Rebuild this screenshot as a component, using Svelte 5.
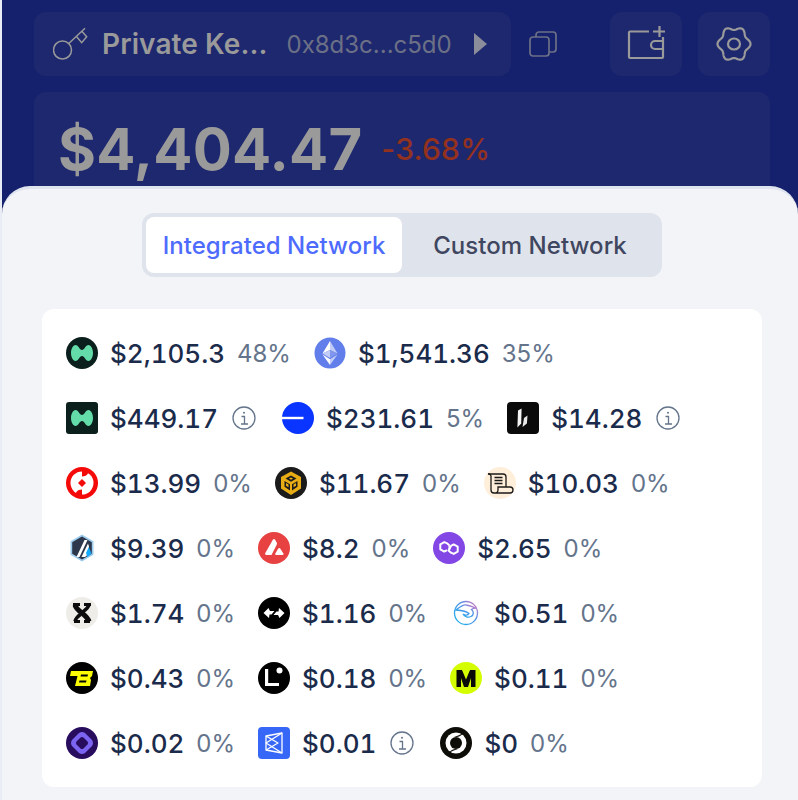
<script lang="ts">
  interface Item {
    icon: string;
    value: string;
    pct?: string;
  }

  const rows: Item[] = [
    { icon: "manta", value: "$2,105.3", pct: "48%" },
    { icon: "eth", value: "$1,541.36", pct: "35%" },
    { icon: "mantaSq", value: "$449.17" },
    { icon: "base", value: "$231.61", pct: "5%" },
    { icon: "blast", value: "$14.28" },
    { icon: "red", value: "$13.99", pct: "0%" },
    { icon: "bnb", value: "$11.67", pct: "0%" },
    { icon: "scroll", value: "$10.03", pct: "0%" },
    { icon: "arb", value: "$9.39", pct: "0%" },
    { icon: "avax", value: "$8.2", pct: "0%" },
    { icon: "matic", value: "$2.65", pct: "0%" },
    { icon: "x", value: "$1.74", pct: "0%" },
    { icon: "swap", value: "$1.16", pct: "0%" },
    { icon: "bird", value: "$0.51", pct: "0%" },
    { icon: "bl", value: "$0.43", pct: "0%" },
    { icon: "linea", value: "$0.18", pct: "0%" },
    { icon: "metis", value: "$0.11", pct: "0%" },
    { icon: "purple", value: "$0.02", pct: "0%" },
    { icon: "blue", value: "$0.01" },
    { icon: "ring", value: "$0", pct: "0%" },
  ];

  // six-lobed cog outline
  const cogPath = Array.from({ length: 120 }, (_, i) => {
    const a = (i / 120) * Math.PI * 2;
    const r = 0.9 + 0.1 * Math.cos(6 * a);
    return `${(18 + 16.5 * r * Math.cos(a)).toFixed(2)},${(17 + 17.5 * r * Math.sin(a)).toFixed(2)}`;
  }).join(" ");
</script>

{#snippet netIcon(name: string)}
  <svg class="net" viewBox="0 0 32 32" aria-hidden="true">
    {#if name === "manta" || name === "mantaSq"}
      {#if name === "manta"}
        <circle cx="16" cy="16" r="16" fill="#0b1f1c" />
      {:else}
        <rect width="32" height="32" rx="3" fill="#0b1f1c" />
      {/if}
      <path d="M5 16c0-4 2-8 4.500-8 3 0 4 5 6.500 5s3.500-5 6.500-5c2.500 0 4.500 4 4.500 8s-2 8-4.500 8c-3 0-4-5-6.500-5s-3.500 5-6.500 5C7 24 5 20 5 16z" fill="#63dcaa" />
    {:else if name === "eth"}
      <circle cx="16" cy="16" r="15.500" fill="#627eea" />
      <path d="M16 4v9l7.500 3.400z" fill="#c1ccf7" />
      <path d="M16 4L8.500 16.400 16 13z" fill="#fff" />
      <path d="M16 13v7.900l7.500-4.500z" fill="#8197ee" />
      <path d="M16 13l-7.500 3.400 7.500 4.500z" fill="#c1ccf7" />
      <path d="M16 22.300V28l7.500-10.400z" fill="#c1ccf7" />
      <path d="M16 22.300l-7.500-4.700L16 28z" fill="#fff" />
    {:else if name === "base"}
      <circle cx="16" cy="16" r="16" fill="#0a34ff" />
      <rect x="0" y="14.800" width="21.500" height="2.400" fill="#fff" />
    {:else if name === "blast"}
      <rect width="32" height="32" rx="4" fill="#0a0a0a" />
      <path d="M11 8.500l3.600-2-.4 15-3.800 4z" fill="#f4f4f4" />
      <path d="M17 16l3.500-2.500-.6 8-4.400 3.500z" fill="#e8e8e8" />
    {:else if name === "red"}
      <circle cx="16" cy="16" r="16" fill="#f50a0a" />
      <circle cx="16" cy="16" r="11.500" fill="#fff" />
      <path d="M16 3h6c1 3.500-1 6.500-6 6.500zM16 29h-6c-1-3.500 1-6.500 6-6.500z" fill="#f50a0a" />
      <path d="M16 12l4 4-4 4-4-4z" fill="#f50a0a" />
    {:else if name === "bnb"}
      <circle cx="16" cy="16" r="16" fill="#1c1b1c" />
      <path d="M16 4.500l10 5.500v11.500l-10 6.500-10-6.500V10z" fill="#e8ad14" />
      <path d="M16 8.500l5.500 3-5.500 3.200-5.500-3.200zM9.500 14l5.500 3.200v6.300l-5.500-3.700zM22.500 14L17 17.200v6.300l5.500-3.700z" fill="#1c1b1c" />
      <path d="M16 10.500l2 1-2 1.200-2-1.200zM11 16l2.500 1.500v2.800l-2.500-1.600zM21 16l-2.500 1.500v2.800l2.500-1.600z" fill="#e8ad14" />
    {:else if name === "scroll"}
      <circle cx="16" cy="16" r="16" fill="#ffeeda" />
      <g fill="none" stroke="#1b1a18" stroke-width="1.300">
        <path d="M4 7h15a3 3 0 0 1 3 3v10" />
        <path d="M4 7a2.500 2.500 0 0 1 3 2v14a3 3 0 0 0 3 3h16a3 3 0 0 0 0-6H14v3a3 3 0 0 1-4 3" />
        <path d="M10.500 10.500h8M10.500 13.500h8M10.500 16.500h8" />
      </g>
    {:else if name === "arb"}
      <path d="M16 2.500l11.500 6.700v13.600L16 29.500 4.500 22.800V9.200z" fill="#9dcced" />
      <path d="M16 4.500l9.800 5.700v11.600L16 27.500 6.200 21.800V10.200z" fill="#2c374b" />
      <path d="M10.500 25l8-17h3l-8 17zM15.500 25L22 11.500l1 3v7l-4 3.500z" fill="#fff" />
      <path d="M20 21l2.800-6 2.700 6.500-4 3.500z" fill="#12aaff" />
    {:else if name === "avax"}
      <circle cx="16" cy="16" r="16" fill="#e84142" />
      <path d="M15 7.500c.5-.8 1.500-.8 2 0l1.700 3c.4.700.4 1.500 0 2.200L13.500 23H8.200c-.9 0-1.400-1-1-1.700z" fill="#fff" />
      <path d="M20.300 16.500c.5-.8 1.500-.8 1.900 0l3.200 5c.5.700 0 1.500-.9 1.500h-6.300c-.9 0-1.400-.8-.9-1.500z" fill="#fff" />
    {:else if name === "matic"}
      <circle cx="16" cy="16" r="16" fill="#8247e5" />
      <g fill="none" stroke="#fff" stroke-width="2" stroke-linejoin="round">
        <path d="M16.500 13.500l-2.500-2.200-2.700-1.200-4 2.200v5l4 2.300 2.700-1.500" />
        <path d="M15.500 18.500l2.500 2.200 2.700 1.200 4-2.200v-5l-4-2.300-2.700 1.500z" />
        <path d="M16.500 13.500v4" />
      </g>
    {:else if name === "x"}
      <circle cx="16" cy="16" r="16" fill="#eeede8" />
      <g fill="none" stroke="#0c0c0c" stroke-linecap="butt">
        <path d="M7 7.500h7M18 7.500h7M8 24.500h6M18 24.500h6" stroke-width="3" />
        <path d="M9 8c2 7 12 9 14 16.500" stroke-width="5" />
        <path d="M23 8c-1.500 4-5 6-7 7.500M14.500 17.500c-2.500 1.500-4.500 3.500-5.500 7" stroke-width="3.500" />
      </g>
    {:else if name === "swap"}
      <circle cx="16" cy="16" r="16" fill="#000" />
      <path d="M5.500 16l5-5 1.500 3h4.500l-3 3.500h-2L11 21z" fill="#fff" />
      <path d="M26.500 16l-5 5-1.500-3h-4.500l3-3.500h2L21 11z" fill="#fff" />
    {:else if name === "bird"}
      <circle cx="16" cy="16" r="11.500" fill="none" stroke="url(#birdGrad)" stroke-width="1.300" />
      <path d="M6 13c4-3 7-6 10-5 3 .5 6 1.500 10 3-2 0-3.500.5-4.500 1.500 2.500 2 2.500 5.500-.5 7-3 1.500-6.500.5-8-2.500 2 1.500 5 1.500 6-.5-2-2-7-3-13-3.500z" fill="none" stroke="url(#birdGrad)" stroke-width="1.300" />
      <defs>
        <linearGradient id="birdGrad" x1="0" y1="1" x2="1" y2="0">
          <stop offset="0" stop-color="#18b5ee" />
          <stop offset="0.6" stop-color="#4d8fe8" />
          <stop offset="1" stop-color="#f27ac0" />
        </linearGradient>
      </defs>
    {:else if name === "bl"}
      <circle cx="16" cy="16" r="16" fill="#000" />
      <path d="M5 9h22l-1 5-2 2 1 2-1 6H9l2.500-10H4z" fill="#fcfc03" />
      <path d="M15 12.500h7l-.5 2h-7zM13.500 18.500h7l-.5 2h-7z" fill="#000" />
    {:else if name === "linea"}
      <circle cx="16" cy="16" r="16" fill="#000" />
      <path d="M7 7h3.200v14H21v3H7z" fill="#fff" />
      <circle cx="21.500" cy="8.500" r="3" fill="#fff" />
    {:else if name === "metis"}
      <circle cx="16" cy="16" r="16" fill="#d4fd00" />
      <path d="M6.500 25V8h5.500l4 9.500 4-9.500h5.500v17h-4.500V16L18 25h-4l-3-9v9z" fill="#0a0a08" />
    {:else if name === "purple"}
      <circle cx="16" cy="16" r="16" fill="#280d5f" />
      <path d="M13 6c2-1.300 4-1.300 6 0l7 7c1.300 2 1.300 4 0 6l-7 7c-2 1.300-4 1.300-6 0l-7-7c-1.300-2-1.300-4 0-6z" fill="#7c64f2" />
      <path d="M14.500 10.500c1-.7 2-.7 3 0l4 4c.7 1 .7 2 0 3l-4 4c-1 .7-2 .7-3 0l-4-4c-.7-1-.7-2 0-3z" fill="#280d5f" />
    {:else if name === "blue"}
      <rect width="32" height="32" rx="4" fill="#3767f6" />
      <g fill="none" stroke="#fff" stroke-width="1.300" stroke-linejoin="round">
        <path d="M8 9l16-3v20l-16-3z" />
        <path d="M24 6L8 16l16 10" />
        <path d="M8 9l12 7-12 7" />
      </g>
    {:else if name === "ring"}
      <circle cx="16" cy="16" r="16" fill="#0e0d08" />
      <circle cx="16" cy="16" r="10.500" fill="#fff" />
      <circle cx="16" cy="16" r="6" fill="#0e0d08" />
      <path d="M24 5c-2 3-4 4.500-7 5l-3-.5c4-.5 7-2 10-4.500zM8 27c2-3 4-4.500 7-5l3 .5c-4 .5-7 2-10 4.500z" fill="#0e0d08" />
    {/if}
  </svg>
{/snippet}

<div class="page">
  <div class="dim">
    <div class="top">
      <div class="account">
        <svg class="key" viewBox="0 0 36 34" fill="none" stroke="#9a9a9a" stroke-width="1.500">
          <circle cx="9.500" cy="23" r="9" />
          <path d="M16 16.300L32 1.300M23 9l5.700 6.700 5-6-4.400-5" />
        </svg>
        <span class="name">Private Ke...</span>
        <span class="addr">0x8d3c...c5d0</span>
        <span class="caret"></span>
      </div>
      <svg class="copy" viewBox="0 0 28 26" fill="none" stroke="#6c7086" stroke-width="1.700">
        <rect x="1" y="6" width="19" height="19" rx="3" />
        <path d="M7 6V4a3 3 0 0 1 3-3h14a3 3 0 0 1 3 3v14a3 3 0 0 1-3 3h-4" />
      </svg>
      <div class="actions">
        <button class="square" aria-label="Add wallet">
          <svg class="wallet" viewBox="0 0 38 36" fill="none" stroke="#9a9a9a" stroke-width="2.200">
            <path d="M22 5.500H3a1 1 0 0 0-1 1V31a1 1 0 0 0 1 1h32a1 1 0 0 0 1-1V11" />
            <path d="M36 15h-8a3.500 3.500 0 0 0 0 8h8" />
            <path d="M26 5.500h12.500M32.500 0v11" />
          </svg>
        </button>
        <button class="square" aria-label="Settings">
          <svg class="cog" viewBox="0 0 36 34" fill="none" stroke="#9a9a9a" stroke-width="2.200" stroke-linejoin="round">
            <polygon points={cogPath} />
            <ellipse cx="18" cy="17" rx="6" ry="5.500" />
          </svg>
        </button>
      </div>
    </div>
    <div class="balance">
      <span class="total">$4,404.47</span>
      <span class="change">-3.68%</span>
    </div>
  </div>

  <div class="sheet">
    <div class="tabs">
      <div class="tab active">Integrated Network</div>
      <div class="tab">Custom Network</div>
    </div>

    <div class="card">
      {#each rows as row}
        <div class="item">
          {@render netIcon(row.icon)}
          <span class="value">{row.value}</span>
          {#if row.pct}
            <span class="pct">{row.pct}</span>
          {:else}
            <svg class="info" viewBox="0 0 24 24" fill="none" stroke="#64748b" stroke-width="1.300">
              <circle cx="12" cy="12" r="11" />
              <circle cx="12" cy="6.800" r="1" fill="#64748b" stroke="none" />
              <path d="M9.500 10.500H12.500V18M9 18h7" />
            </svg>
          {/if}
        </div>
      {/each}
    </div>
  </div>
</div>

<style>
  :global(body) {
    background: #e9ebf5;
    font-family: Inter, "Liberation Sans", sans-serif;
    font-optical-sizing: none;
    font-variation-settings: "opsz" 14;
  }
  .page {
    margin-left: 2px;
    height: 800px;
    overflow: hidden;
    background: #16216e;
  }
  .dim {
    height: 186px;
    padding: 12px 28px 0 32px;
    box-sizing: border-box;
  }
  .top {
    display: flex;
    align-items: center;
    height: 64px;
  }
  .account {
    width: 477px;
    height: 64px;
    box-sizing: border-box;
    padding-left: 19px;
    display: flex;
    align-items: center;
    background: #1e286f;
    border-radius: 12px;
  }
  .key {
    width: 36px;
    height: 34px;
  }
  .name {
    margin-left: 13px;
    font-size: 28px;
    font-weight: 600;
    color: #9a9a9a;
    letter-spacing: 0.1px;
  }
  .addr {
    margin-left: 19px;
    font-size: 24px;
    color: #6c7086;
  }
  .caret {
    margin-left: 22px;
    border-left: 13px solid #8b8d9b;
    border-top: 11.500px solid transparent;
    border-bottom: 11.500px solid transparent;
  }
  .copy {
    margin-left: 18px;
    width: 28px;
    height: 26px;
  }
  .actions {
    margin-left: auto;
    display: flex;
    gap: 16px;
  }
  .square {
    width: 72px;
    height: 64px;
    padding: 0;
    border: 0;
    border-radius: 12px;
    background: #1e286f;
    display: flex;
    align-items: center;
    justify-content: center;
  }
  .wallet {
    width: 38px;
    height: 36px;
  }
  .cog {
    width: 36px;
    height: 34px;
  }
  .balance {
    margin-top: 16px;
    height: 94px;
    box-sizing: border-box;
    padding: 20px 0 0 24px;
    display: flex;
    align-items: center;
    gap: 19px;
    background: #1e286f;
    border-radius: 12px 12px 0 0;
  }
  .total {
    font-size: 58px;
    line-height: 72px;
    font-weight: 700;
    color: #9a9a9a;
    letter-spacing: 0.2px;
  }
  .change {
    font-size: 30px;
    line-height: 36px;
    font-weight: 500;
    color: #93311f;
    letter-spacing: 0.2px;
  }
  .sheet {
    height: 614px;
    box-sizing: border-box;
    padding: 24px 36px 0 40px;
    background: #f2f4f8;
    border-top: 3px solid #dfe5ee;
    border-radius: 28px 28px 0 0;
  }
  .tabs {
    width: 520px;
    height: 64px;
    box-sizing: border-box;
    margin: 0 auto;
    padding: 4px;
    display: flex;
    background: #dfe3eb;
    border-radius: 12px;
  }
  .tab {
    display: flex;
    align-items: center;
    justify-content: center;
    width: 256px;
    border-radius: 8px;
    font-size: 24px;
    font-weight: 500;
    color: #3f4660;
    letter-spacing: 0.05px;
  }
  .tab.active {
    background: #fff;
    color: #4d6bfe;
  }
  .card {
    margin-top: 32px;
    height: 478px;
    box-sizing: border-box;
    padding: 28px 24px 0;
    display: flex;
    flex-wrap: wrap;
    align-content: flex-start;
    gap: 33px 23px;
    background: #fff;
    border-radius: 12px;
  }
  .item {
    display: flex;
    align-items: center;
    height: 32px;
  }
  .net {
    width: 32px;
    height: 32px;
    flex: none;
  }
  .value {
    margin-left: 12px;
    font-size: 26px;
    font-weight: 500;
    color: #1b2b4b;
    font-variant-numeric: tabular-nums;
  }
  .pct {
    margin-left: 12px;
    font-size: 24px;
    color: #64748b;
  }
  .info {
    margin: 0 3px 0 14px;
    width: 24px;
    height: 24px;
  }
</style>
